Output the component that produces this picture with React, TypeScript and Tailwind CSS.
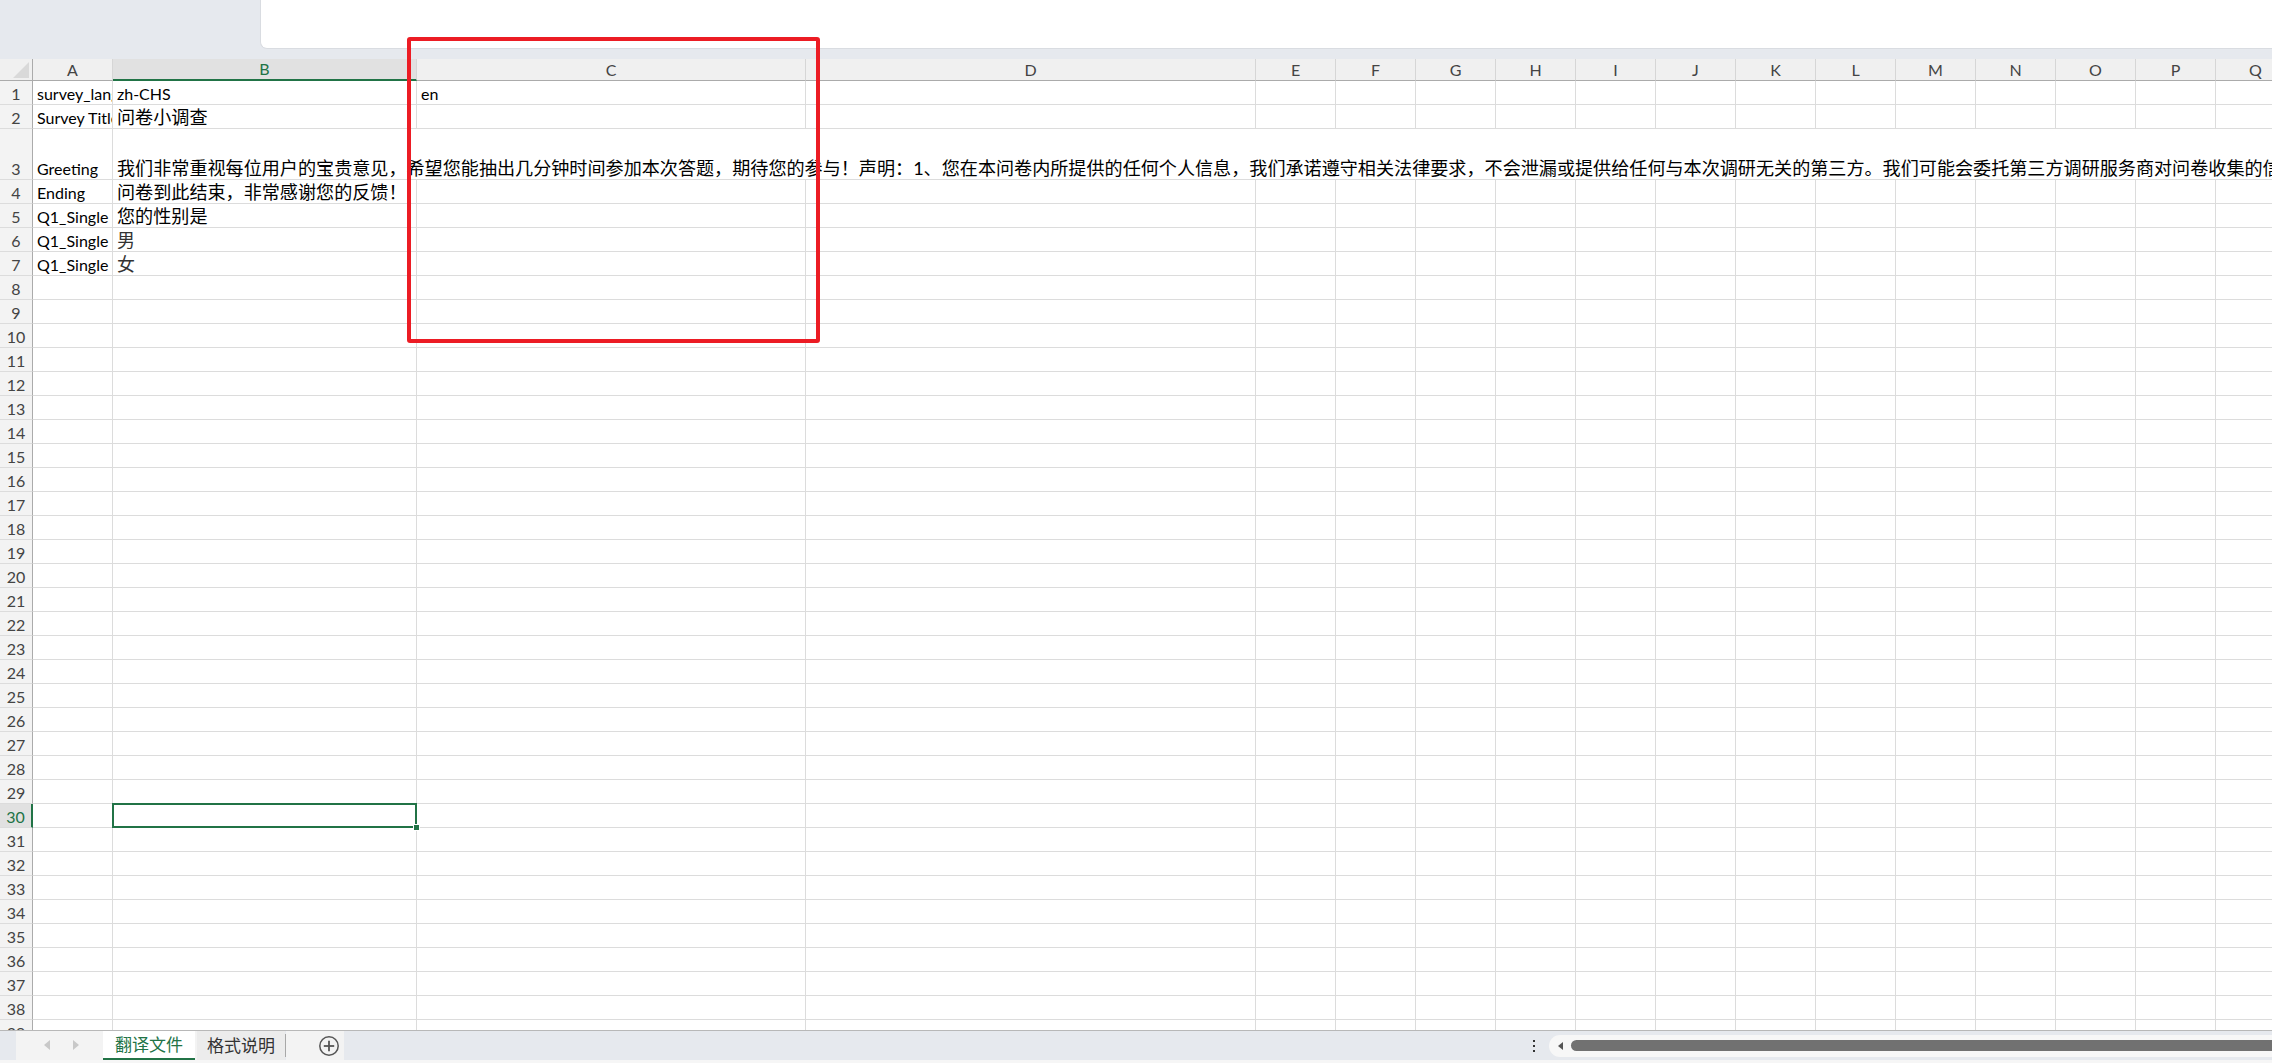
import React from "react";

type Col = { k: string; w: string };
const COLS: Col[] = [
  { k: "A", w: "w-[80px]" },
  { k: "B", w: "w-[304px]" },
  { k: "C", w: "w-[389px]" },
  { k: "D", w: "w-[450px]" },
  ...["E", "F", "G", "H", "I", "J", "K", "L", "M", "N", "O", "P", "Q"].map((k) => ({ k, w: "w-[80px]" })),
];

type CellData = { text: string; kind?: "latin" | "cjk" | "serif"; overflow?: boolean };

const GREETING =
  "我们非常重视每位用户的宝贵意见，希望您能抽出几分钟时间参加本次答题，期待您的参与！声明：1、您在本问卷内所提供的任何个人信息，我们承诺遵守相关法律要求，不会泄漏或提供给任何与本次调研无关的第三方。我们可能会委托第三方调研服务商对问卷收集的信息";

const DATA: Record<number, Record<string, CellData>> = {
  1: { A: { text: "survey_language" }, B: { text: "zh-CHS" }, C: { text: "en" } },
  2: { A: { text: "Survey Title" }, B: { text: "问卷小调查", kind: "cjk" } },
  3: { A: { text: "Greeting" }, B: { text: GREETING, kind: "cjk", overflow: true } },
  4: { A: { text: "Ending" }, B: { text: "问卷到此结束，非常感谢您的反馈！", kind: "cjk" } },
  5: { A: { text: "Q1_Single" }, B: { text: "您的性别是", kind: "cjk" } },
  6: { A: { text: "Q1_Single" }, B: { text: "男", kind: "serif" } },
  7: { A: { text: "Q1_Single" }, B: { text: "女", kind: "serif" } },
};

const ROWS = Array.from({ length: 39 }, (_, i) => i + 1);

function textClass(kind?: string) {
  if (kind === "cjk") return "text-[18.1px] leading-[21px] text-black";
  if (kind === "serif") return "text-[18px] leading-[21px] text-[#333]";
  return "text-[16px] leading-[21px] text-black";
}

function Row({ r }: { r: number }) {
  const rowData = DATA[r] || {};
  const sel = r === 30;
  const tall = r === 3;
  return (
    <div className={`flex shrink-0 ${tall ? "h-[51px]" : "h-[24px]"}`}>
      <div
        className={`w-[33px] shrink-0 h-full flex items-end justify-center text-[16px] leading-[21px] border-b border-[#dcdcdc] ${
          sel
            ? "bg-[#e1e1e1] text-[#217346] border-r-2 border-r-[#217346]"
            : "bg-[#f3f3f3] text-[#444] border-r border-r-[#ababab]"
        }`}
      >
        {r}
      </div>
      {COLS.map((c) => {
        const d = rowData[c.k];
        const hideR = tall && c.k !== "A";
        const isSel = sel && c.k === "B";
        return (
          <div
            key={c.k}
            className={`${c.w} shrink-0 h-full border-b border-[#dcdcdc] ${hideR ? "" : "border-r"} flex items-end pl-[4px] whitespace-nowrap ${
              d?.overflow ? "overflow-visible relative z-10" : isSel ? "relative" : "overflow-hidden"
            }`}
          >
            {d && <span className={textClass(d.kind)}>{d.text}</span>}
            {isSel && (
              <>
                <div className="absolute -left-[1px] -top-[1px] -right-[1px] -bottom-[1px] border-2 border-[#217346] pointer-events-none" />
                <div className="absolute -right-[4px] -bottom-[4px] w-[7px] h-[7px] bg-[#217346] border border-white" />
              </>
            )}
          </div>
        );
      })}
    </div>
  );
}

function HeaderRow() {
  return (
    <div className="flex shrink-0 h-[22px]">
      <div className="w-[33px] shrink-0 h-full bg-[#f0f0f0] border-r border-b border-[#ababab] relative">
        <svg width="33" height="22" className="absolute left-0 top-0">
          <polygon points="29,3 29,19 13,19" fill="#d9d9d9" />
        </svg>
      </div>
      {COLS.map((c) => {
        const sel = c.k === "B";
        return (
          <div
            key={c.k}
            className={`${c.w} shrink-0 h-full flex items-center justify-center text-[16px] border-r border-r-[#d6d6d6] ${
              sel
                ? "bg-[#e1e1e1] text-[#217346] border-b-2 border-b-[#217346]"
                : "bg-[#f0f0f0] text-[#444] border-b border-b-[#ababab]"
            }`}
          >
            {c.k}
          </div>
        );
      })}
    </div>
  );
}

function TabBar() {
  return (
    <div className="h-[30px] shrink-0 flex bg-[#e6e9ee] border-t border-[#b8b8b8]">
      <div className="w-[16px] shrink-0" />
      <div className="w-[87px] shrink-0 bg-[#f3f3f3] flex items-center">
        <svg width="87" height="29">
          <polygon points="34,9 34,19 28,14" fill="#c8c8c8" />
          <polygon points="57,9 57,19 63,14" fill="#c8c8c8" />
        </svg>
      </div>
      <div className="w-[92px] shrink-0 bg-white border-b-2 border-[#217346] flex items-center justify-center text-[17px] text-[#217346]">
        翻译文件
      </div>
      <div className="w-[2px] shrink-0 bg-[#f3f3f3]" />
      <div className="w-[88px] shrink-0 bg-[#ececec] flex items-center justify-center text-[17px] text-[#333]">
        格式说明
      </div>
      <div className="w-[1px] shrink-0 bg-[#a8a8a8] my-[3px]" />
      <div className="w-[58px] shrink-0 bg-[#f3f3f3] flex items-center justify-center">
        <svg width="22" height="22" viewBox="0 0 22 22" className="ml-[27px]">
          <circle cx="11" cy="11" r="9.2" fill="none" stroke="#555" strokeWidth="1.5" />
          <line x1="5.8" y1="11" x2="16.2" y2="11" stroke="#555" strokeWidth="1.8" />
          <line x1="11" y1="5.8" x2="11" y2="16.2" stroke="#555" strokeWidth="1.8" />
        </svg>
      </div>
      <div className="flex-1" />
      <div className="w-[14px] shrink-0 flex items-center justify-center">
        <svg width="4" height="14" viewBox="0 0 4 14">
          <rect x="1" y="1" width="2" height="2" fill="#333" />
          <rect x="1" y="6" width="2" height="2" fill="#333" />
          <rect x="1" y="11" width="2" height="2" fill="#333" />
        </svg>
      </div>
      <div className="w-[8px] shrink-0" />
      <div className="w-[723px] shrink-0 h-[22px] self-center rounded-l-full bg-[#f7f7f7] flex items-center">
        <svg width="16" height="12" className="ml-[6px] shrink-0">
          <polygon points="8,2 8,10 3,6" fill="#555" />
        </svg>
        <div className="flex-1 h-[11px] rounded-l-full bg-[#717171]" />
      </div>
    </div>
  );
}

export default function App() {
  return (
    <div className="w-[2272px] h-[1063px] overflow-hidden relative flex flex-col bg-white font-['Lato','Noto_Sans_CJK_SC',sans-serif]">
      <div className="h-[59px] shrink-0 bg-[#e6e9ee] flex">
        <div className="ml-[260px] flex-1 h-[49px] bg-white rounded-bl-[7px] border-l border-b border-[#d9dce1]" />
      </div>
      <div className="flex-1 flex flex-col overflow-hidden">
        <HeaderRow />
        {ROWS.map((r) => (
          <Row key={r} r={r} />
        ))}
      </div>
      <TabBar />
      <div className="h-[3px] shrink-0 bg-[#f6f6f6]" />
      <div className="absolute left-[407px] top-[37px] w-[413px] h-[306px] border-[4px] border-[#ec1c24] rounded-[3px] pointer-events-none z-20" />
    </div>
  );
}
